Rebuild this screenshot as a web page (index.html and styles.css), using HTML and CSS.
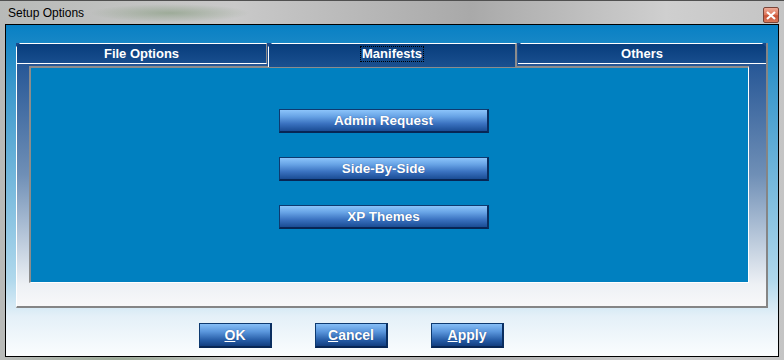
FILE: index.html
```html
<!DOCTYPE html>
<html lang="en">

<head>
    <meta charset="UTF-8">
    <title>Setup Options</title>
    <link rel="stylesheet" href="styles.css">
</head>

<body>
    <div class="window">
        <div class="titlebar">
            <span class="title">Setup Options</span>
            <div class="close">
                <svg width="10" height="9" viewBox="0 0 10 9">
                    <path d="M1 1 L9 8 M9 1 L1 8" stroke="#fff" stroke-width="2.2" fill="none" />
                </svg>
            </div>
        </div>
        <div class="client">
            <div class="tabctl">
                <div class="tabs">
                    <div class="tab tab-first">File Options</div>
                    <div class="tab tab-active"><span class="focus">Manifests</span></div>
                    <div class="tab tab-last">Others</div>
                </div>
                <div class="page">
                    <div class="btn btn-wide">Admin Request</div>
                    <div class="btn btn-wide">Side-By-Side</div>
                    <div class="btn btn-wide">XP Themes</div>
                </div>
            </div>
            <div class="footer">
                <div class="btn btn-small"><u>O</u>K</div>
                <div class="btn btn-small"><u>C</u>ancel</div>
                <div class="btn btn-small"><u>A</u>pply</div>
            </div>
        </div>
    </div>
</body>

</html>
```

FILE: styles.css
```css
body {
    margin: 0;
    font-family: "Liberation Sans", Arial, sans-serif;
}

.window {
    width: 784px;
    height: 360px;
    box-sizing: border-box;
    border-top: 1px solid #505050;
    display: flex;
    flex-direction: column;
    background:
        radial-gradient(ellipse 80px 9px at 170px 12px, rgba(110, 140, 100, 0.45), transparent),
        radial-gradient(ellipse 120px 6px at 120px 358px, rgba(110, 140, 100, 0.5), transparent),
        linear-gradient(90deg, #b8bab8 0%, #c9c9c9 30%, #a9a9a9 60%, #cfcfcf 85%, #c4c4c4 100%);
}

.titlebar {
    height: 23px;
    display: flex;
    align-items: flex-start;
    justify-content: space-between;
    padding: 0 5px 0 8px;
}

.title {
    margin-top: 5px;
    font-size: 12px;
    line-height: 14px;
    color: #000;
}

.close {
    margin-top: 6px;
    width: 16px;
    height: 16px;
    box-sizing: border-box;
    border: 1px solid #7a4438;
    border-radius: 2px;
    background: linear-gradient(#eeaa96, #dc7458 50%, #c85034 55%, #d87a5c);
    display: flex;
    align-items: center;
    justify-content: center;
}

.client {
    height: 333px;
    box-sizing: border-box;
    margin: 0 5px;
    border: 1px solid #000;
    padding: 18px 10px 0 10px;
    background: linear-gradient(#0880c4 0%, #3a98cc 18%, #b0d8ec 77%, #e4f0f8 88%, #fbfdfe 100%);
}

.tabctl {
    height: 265px;
    box-sizing: border-box;
    border-left: 1px solid #fff;
    border-right: 2px solid #858585;
    border-bottom: 2px solid #858585;
    background: linear-gradient(#18498a 0%, #2a5a98 10%, #6f8fb6 50%, #c4d1e0 78%, #eef1f5 92%, #f8f8f9 100%);
}

.tabs {
    height: 21px;
    display: flex;
    align-items: flex-start;
    gap: 1px;
}

.tab {
    position: relative;
    height: 21px;
    box-sizing: border-box;
    border-top: 1px solid #fff;
    border-bottom: 1px solid #fff;
    border-right: 1px solid #8c8c8c;
    background: linear-gradient(#083d7c, #184e8e);
    color: #fff;
    font-size: 13px;
    font-weight: bold;
    line-height: 19px;
    text-align: center;
}

.tab::before {
    content: "";
    position: absolute;
    top: -1px;
    left: -1px;
    border-top: 4px solid #1a4a8c;
    border-right: 4px solid transparent;
}

.tab-first {
    width: 250px;
}

.tab-active {
    width: 249px;
    height: 24px;
    margin-bottom: -3px;
    border-bottom: none;
    border-left: 1px solid #fff;
    border-right: 2px solid #8c8c8c;
    background: linear-gradient(#083d7c, #1a5090);
}

.tab-last {
    width: 248px;
    border-right: none;
}

.tab-last::after {
    content: "";
    position: absolute;
    top: -1px;
    right: 0;
    border-top: 4px solid #1a4a8c;
    border-left: 4px solid transparent;
}

.focus {
    display: inline-block;
    padding: 0 1px;
    line-height: 14px;
    border: 1px dotted #000;
}

.page {
    margin: 2px 0 0 12px;
    width: 720px;
    height: 217px;
    box-sizing: border-box;
    border-top: 2px solid #8c8c8c;
    border-left: 2px solid #8c8c8c;
    border-right: 1px solid #fff;
    border-bottom: 1px solid #fff;
    background-color: #0080c0;
    padding: 41px 0 0 248px;
    display: flex;
    flex-direction: column;
    gap: 24px;
}

.btn {
    box-sizing: border-box;
    border: 1px solid #0e3a70;
    border-right: 2px solid #0a2e60;
    border-bottom: 2px solid #072655;
    background: linear-gradient(#8cc4fa 0%, #68a4e6 30%, #3a72c0 65%, #1a4c94 100%);
    color: #fff;
    font-weight: bold;
    text-align: center;
    text-shadow: 0 0 1px rgba(0, 30, 80, 0.5);
}

.btn-wide {
    width: 210px;
    height: 24px;
    font-size: 13.5px;
    line-height: 21px;
}

.footer {
    margin-top: 15px;
    padding-left: 183px;
    display: flex;
    gap: 43px;
}

.btn-small {
    width: 73px;
    height: 25px;
    font-size: 14px;
    line-height: 22px;
    background: linear-gradient(#86bef6 0%, #5a96dc 35%, #245aa4 75%, #123e80 100%);
}
```
